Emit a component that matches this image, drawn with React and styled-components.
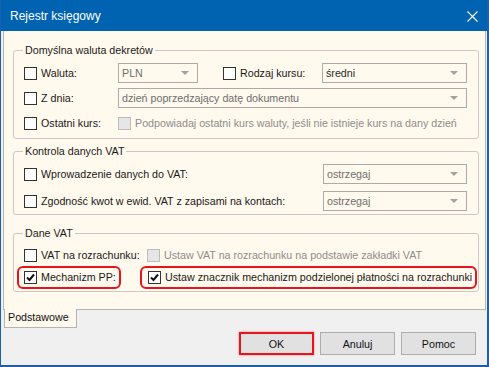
import React from 'react'
import styled, { createGlobalStyle } from 'styled-components'

const GlobalStyle = createGlobalStyle`
  html, body {
    margin: 0;
    padding: 0;
    background: #ffffff;
  }
  body {
    font-family: "Liberation Sans", Arial, sans-serif;
    font-size: 10.7px;
    color: #1a1a1a;
  }
`

function CheckMark() {
  return (
    <svg width="9" height="9" viewBox="0 0 9 9">
      <path d="M1 4.5 L3.5 7 L8 1.5" fill="none" stroke="#111" strokeWidth="2" />
    </svg>
  )
}

function Checkbox(props) {
  return (
    <Box $disabled={props.disabled}>
      {props.checked && <CheckMark />}
    </Box>
  )
}

function Combo(props) {
  return (
    <Select $width={props.width} $enabled={props.enabled}>
      <span>{props.value}</span>
      <Arrow />
    </Select>
  )
}

function CloseIcon() {
  return (
    <svg width="11" height="11" viewBox="0 0 11 11">
      <path d="M0.5 0.5 L10.5 10.5 M10.5 0.5 L0.5 10.5" stroke="#fff" strokeWidth="1.1" />
    </svg>
  )
}

export default function App() {
  return (
    <>
      <GlobalStyle />
      <Window>
        <TitleBar>
          <Title>Rejestr księgowy</Title>
          <CloseButton><CloseIcon /></CloseButton>
        </TitleBar>
        <Body>
          <Panel>
            <Group style={{ marginTop: 12 }} $pad="6px 11px 5px 10px" $gap={5}>
              <Legend>Domyślna waluta dekretów</Legend>
              <Row>
                <Check $width={94}><Checkbox /><Label>Waluta:</Label></Check>
                <Combo value="PLN" width={80} />
                <Check $width={99} $ml={25}><Checkbox /><Label>Rodzaj kursu:</Label></Check>
                <Combo value="średni" enabled />
              </Row>
              <Row>
                <Check $width={94}><Checkbox /><Label>Z dnia:</Label></Check>
                <Combo value="dzień poprzedzający datę dokumentu" />
              </Row>
              <Row>
                <Check $width={94}><Checkbox /><Label>Ostatni kurs:</Label></Check>
                <Check><Checkbox disabled /><Label $muted>Podpowiadaj ostatni kurs waluty, jeśli nie istnieje kurs na dany dzień</Label></Check>
              </Row>
            </Group>

            <Group style={{ marginTop: 5 }} $pad="6px 11px 3px 10px" $gap={7}>
              <Legend>Kontrola danych VAT</Legend>
              <Row>
                <Check $grow><Checkbox /><Label>Wprowadzenie danych do VAT:</Label></Check>
                <Combo value="ostrzegaj" width={144} />
              </Row>
              <Row>
                <Check $grow><Checkbox /><Label>Zgodność kwot w ewid. VAT z zapisami na kontach:</Label></Check>
                <Combo value="ostrzegaj" width={144} />
              </Row>
            </Group>

            <Group style={{ marginTop: 11 }} $pad="5px 11px 4px 10px" $gap={2}>
              <Legend>Dane VAT</Legend>
              <Row>
                <Check $width={123}><Checkbox /><Label>VAT na rozrachunku:</Label></Check>
                <Check><Checkbox disabled /><Label $muted>Ustaw VAT na rozrachunku na podstawie zakładki VAT</Label></Check>
              </Row>
              <Row>
                <Highlight $ml={-7} $pl={5} $width={104}>
                  <Checkbox checked /><Label>Mechanizm PP:</Label>
                </Highlight>
                <Highlight $ml={19} $pl={6}>
                  <Checkbox checked /><Label>Ustaw znacznik mechanizm podzielonej płatności na rozrachunki</Label>
                </Highlight>
              </Row>
            </Group>
          </Panel>

          <TabStrip>
            <Tab>Podstawowe</Tab>
          </TabStrip>

          <ButtonRow>
            <Button $focused>OK</Button>
            <Button>Anuluj</Button>
            <Button>Pomoc</Button>
          </ButtonRow>
        </Body>
      </Window>
    </>
  )
}

const Window = styled.div`
  width: 489px;
  height: 367px;
  box-sizing: border-box;
  display: flex;
  flex-direction: column;
  border-left: 1px solid #1c5fae;
  border-right: 2px solid #1c5fae;
  border-bottom: 2px solid #1c5fae;
  background: #f0f0f0;
`

const TitleBar = styled.div`
  height: 31px;
  flex: none;
  display: flex;
  align-items: center;
  justify-content: space-between;
  background: #0063b1;
  padding: 0 9px 0 9px;
`

const Title = styled.div`
  color: #ffffff;
  font-size: 12px;
  padding-top: 1px;
`

const CloseButton = styled.div`
  width: 12px;
  height: 12px;
  display: flex;
  align-items: center;
  justify-content: center;
  margin-top: 2px;
`

const Body = styled.div`
  flex: 1;
  display: flex;
  flex-direction: column;
  padding: 0 1px 0 2px;
`

const Panel = styled.div`
  height: 279px;
  box-sizing: border-box;
  flex: none;
  background: #fff9ee;
  border: 1px solid #b4b4b4;
  border-top: none;
  padding: 0 6px 0 9px;
  display: flex;
  flex-direction: column;
`

const Group = styled.fieldset`
  margin: 0;
  border: 1px solid #c9c9c9;
  border-radius: 3px;
  padding: ${p => p.$pad};
  min-width: 0;
  display: flex;
  flex-direction: column;
  gap: ${p => p.$gap}px;
`

const Legend = styled.legend`
  padding: 0 2px;
  margin-left: -1px;
  line-height: 14px;
  color: #1a1a1a;
`

const Row = styled.div`
  height: 20px;
  display: flex;
  align-items: center;
`

const Check = styled.div`
  display: flex;
  align-items: center;
  gap: 4px;
  flex: ${p => (p.$grow ? 1 : 'none')};
  width: ${p => (p.$width ? p.$width + 'px' : 'auto')};
  margin-left: ${p => p.$ml || 0}px;
  white-space: nowrap;
`

const Highlight = styled.div`
  display: flex;
  align-items: center;
  gap: 4px;
  box-sizing: border-box;
  height: 23px;
  flex: none;
  width: ${p => (p.$width ? p.$width + 'px' : 'auto')};
  margin-left: ${p => p.$ml}px;
  padding: 0 3px 0 ${p => p.$pl}px;
  border: 2px solid #e8141c;
  border-radius: 6px;
  white-space: nowrap;
`

const Box = styled.span`
  width: 13px;
  height: 13px;
  box-sizing: border-box;
  flex: none;
  display: flex;
  align-items: center;
  justify-content: center;
  border: 1px solid ${p => (p.$disabled ? '#bcbcbc' : '#333333')};
  background: ${p => (p.$disabled ? '#e6e6e6' : '#ffffff')};
`

const Label = styled.span`
  color: ${p => (p.$muted ? '#8d8d8d' : '#1a1a1a')};
  line-height: 14px;
`

const Select = styled.div`
  height: 20px;
  box-sizing: border-box;
  display: flex;
  align-items: center;
  justify-content: space-between;
  flex: ${p => (p.$width ? 'none' : 1)};
  width: ${p => (p.$width ? p.$width + 'px' : 'auto')};
  border: 1px solid #ababab;
  background: #fff9ee;
  padding: 0 8px 0 3px;
  color: ${p => (p.$enabled ? '#2a2a2a' : '#6f6f6f')};
  white-space: nowrap;
`

const Arrow = styled.span`
  width: 0;
  height: 0;
  border-left: 4px solid transparent;
  border-right: 4px solid transparent;
  border-top: 4px solid #a2a2a2;
`

const TabStrip = styled.div`
  display: flex;
  padding-left: 1px;
  margin-top: -1px;
`

const Tab = styled.div`
  width: 73px;
  height: 19px;
  box-sizing: border-box;
  background: #fff9ee;
  border: 1px solid #b4b4b4;
  border-top: none;
  padding: 2px 0 0 3px;
  color: #111;
`

const ButtonRow = styled.div`
  display: flex;
  justify-content: flex-end;
  gap: 6px;
  margin-top: 4px;
  padding-right: 10px;
`

const Button = styled.div`
  width: 75px;
  height: 23px;
  box-sizing: border-box;
  display: flex;
  align-items: center;
  justify-content: center;
  background: #e1e1e1;
  border: ${p => (p.$focused ? '2px solid #e8141c' : '1px solid #adadad')};
  box-shadow: ${p => (p.$focused ? '0 0 2px rgba(232,20,28,0.5)' : 'none')};
  color: #111;
`
